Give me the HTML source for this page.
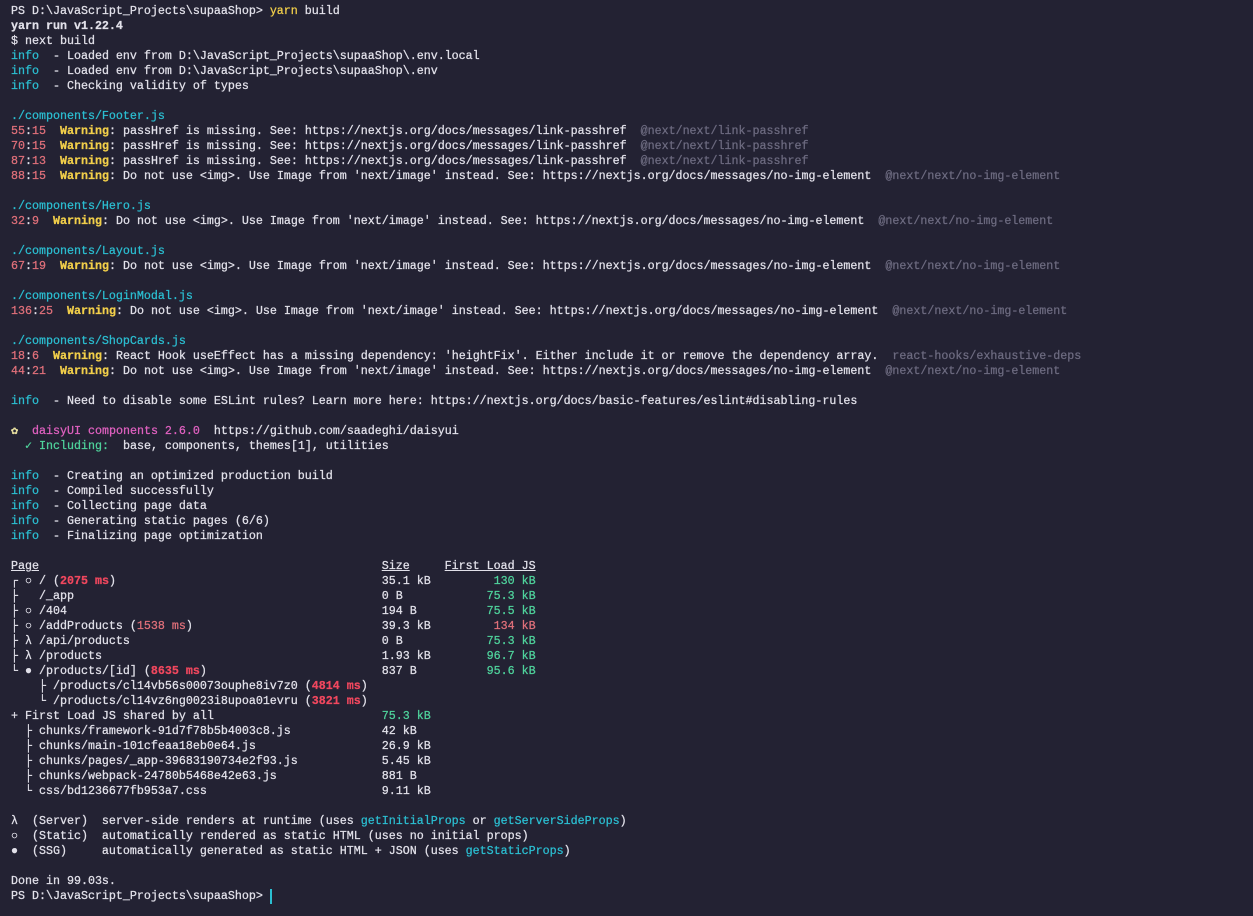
<!DOCTYPE html>
<html><head><meta charset="utf-8"><style>
html,body{margin:0;padding:0;background:#232233;width:1253px;height:916px;overflow:hidden}
pre{margin:0;padding:4px 0 0 11px;font-family:"Liberation Mono","DejaVu Sans Mono",monospace;font-size:11.67px;line-height:15px;color:#e2e1ea;white-space:pre;-webkit-text-stroke:0.25px currentColor}
.c{color:#2bbfd2}.y{color:#f2cf4a}.w{color:#f2cf4a;font-weight:bold}.r{color:#e0707a}.R{color:#f0475e;font-weight:bold}
.g{color:#6d6b80}.p{color:#e061c0}.G{color:#4fd39c}.b{font-weight:bold}.u{text-decoration:underline}
.a{display:inline-block;width:53ch}.s{display:inline-block;width:9ch}.f{display:inline-block;width:13ch;text-align:right}
.cur{display:inline-block;width:2px;height:15px;background:#2bbfd2;vertical-align:top}
</style></head><body><pre>PS D:\JavaScript_Projects\supaaShop&gt; <span class="y">yarn</span> build
<span class="b">yarn run v1.22.4</span>
$ next build
<span class="c">info</span>  - Loaded env from D:\JavaScript_Projects\supaaShop\.env.local
<span class="c">info</span>  - Loaded env from D:\JavaScript_Projects\supaaShop\.env
<span class="c">info</span>  - Checking validity of types

<span class="c">./components/Footer.js</span>
<span class="r">55</span>:<span class="r">15</span>  <span class="w">Warning</span>: passHref is missing. See: https://nextjs.org/docs/messages/link-passhref  <span class="g">@next/next/link-passhref</span>
<span class="r">70</span>:<span class="r">15</span>  <span class="w">Warning</span>: passHref is missing. See: https://nextjs.org/docs/messages/link-passhref  <span class="g">@next/next/link-passhref</span>
<span class="r">87</span>:<span class="r">13</span>  <span class="w">Warning</span>: passHref is missing. See: https://nextjs.org/docs/messages/link-passhref  <span class="g">@next/next/link-passhref</span>
<span class="r">88</span>:<span class="r">15</span>  <span class="w">Warning</span>: Do not use &lt;img&gt;. Use Image from 'next/image' instead. See: https://nextjs.org/docs/messages/no-img-element  <span class="g">@next/next/no-img-element</span>

<span class="c">./components/Hero.js</span>
<span class="r">32</span>:<span class="r">9</span>  <span class="w">Warning</span>: Do not use &lt;img&gt;. Use Image from 'next/image' instead. See: https://nextjs.org/docs/messages/no-img-element  <span class="g">@next/next/no-img-element</span>

<span class="c">./components/Layout.js</span>
<span class="r">67</span>:<span class="r">19</span>  <span class="w">Warning</span>: Do not use &lt;img&gt;. Use Image from 'next/image' instead. See: https://nextjs.org/docs/messages/no-img-element  <span class="g">@next/next/no-img-element</span>

<span class="c">./components/LoginModal.js</span>
<span class="r">136</span>:<span class="r">25</span>  <span class="w">Warning</span>: Do not use &lt;img&gt;. Use Image from 'next/image' instead. See: https://nextjs.org/docs/messages/no-img-element  <span class="g">@next/next/no-img-element</span>

<span class="c">./components/ShopCards.js</span>
<span class="r">18</span>:<span class="r">6</span>  <span class="w">Warning</span>: React Hook useEffect has a missing dependency: 'heightFix'. Either include it or remove the dependency array.  <span class="g">react-hooks/exhaustive-deps</span>
<span class="r">44</span>:<span class="r">21</span>  <span class="w">Warning</span>: Do not use &lt;img&gt;. Use Image from 'next/image' instead. See: https://nextjs.org/docs/messages/no-img-element  <span class="g">@next/next/no-img-element</span>

<span class="c">info</span>  - Need to disable some ESLint rules? Learn more here: https://nextjs.org/docs/basic-features/eslint#disabling-rules

<span style="color:#e8e0a0">✿</span>  <span class="p">daisyUI components 2.6.0</span>  https://github.com/saadeghi/daisyui
  <span class="G">✓ Including:</span>  base, components, themes[1], utilities

<span class="c">info</span>  - Creating an optimized production build
<span class="c">info</span>  - Compiled successfully
<span class="c">info</span>  - Collecting page data
<span class="c">info</span>  - Generating static pages (6/6)
<span class="c">info</span>  - Finalizing page optimization

<span class="a"><span class="u">Page</span></span><span class="s"><span class="u">Size</span></span><span class="u">First Load JS</span>
<span class="a">┌ ○ / (<span class="R">2075 ms</span>)</span><span class="s">35.1 kB</span><span class="f G">130 kB</span>
<span class="a">├   /_app</span><span class="s">0 B</span><span class="f G">75.3 kB</span>
<span class="a">├ ○ /404</span><span class="s">194 B</span><span class="f G">75.5 kB</span>
<span class="a">├ ○ /addProducts (<span class="r">1538 ms</span>)</span><span class="s">39.3 kB</span><span class="f r">134 kB</span>
<span class="a">├ λ /api/products</span><span class="s">0 B</span><span class="f G">75.3 kB</span>
<span class="a">├ λ /products</span><span class="s">1.93 kB</span><span class="f G">96.7 kB</span>
<span class="a">└ ● /products/[id] (<span class="R">8635 ms</span>)</span><span class="s">837 B</span><span class="f G">95.6 kB</span>
    ├ /products/cl14vb56s00073ouphe8iv7z0 (<span class="R">4814 ms</span>)
    └ /products/cl14vz6ng0023i8upoa01evru (<span class="R">3821 ms</span>)
<span class="a">+ First Load JS shared by all</span><span class="G">75.3 kB</span>
<span class="a">  ├ chunks/framework-91d7f78b5b4003c8.js</span>42 kB
<span class="a">  ├ chunks/main-101cfeaa18eb0e64.js</span>26.9 kB
<span class="a">  ├ chunks/pages/_app-39683190734e2f93.js</span>5.45 kB
<span class="a">  ├ chunks/webpack-24780b5468e42e63.js</span>881 B
<span class="a">  └ css/bd1236677fb953a7.css</span>9.11 kB

λ  (Server)  server-side renders at runtime (uses <span class="c">getInitialProps</span> or <span class="c">getServerSideProps</span>)
○  (Static)  automatically rendered as static HTML (uses no initial props)
●  (SSG)     automatically generated as static HTML + JSON (uses <span class="c">getStaticProps</span>)

Done in 99.03s.
PS D:\JavaScript_Projects\supaaShop&gt; <span class="cur"></span></pre></body></html>
